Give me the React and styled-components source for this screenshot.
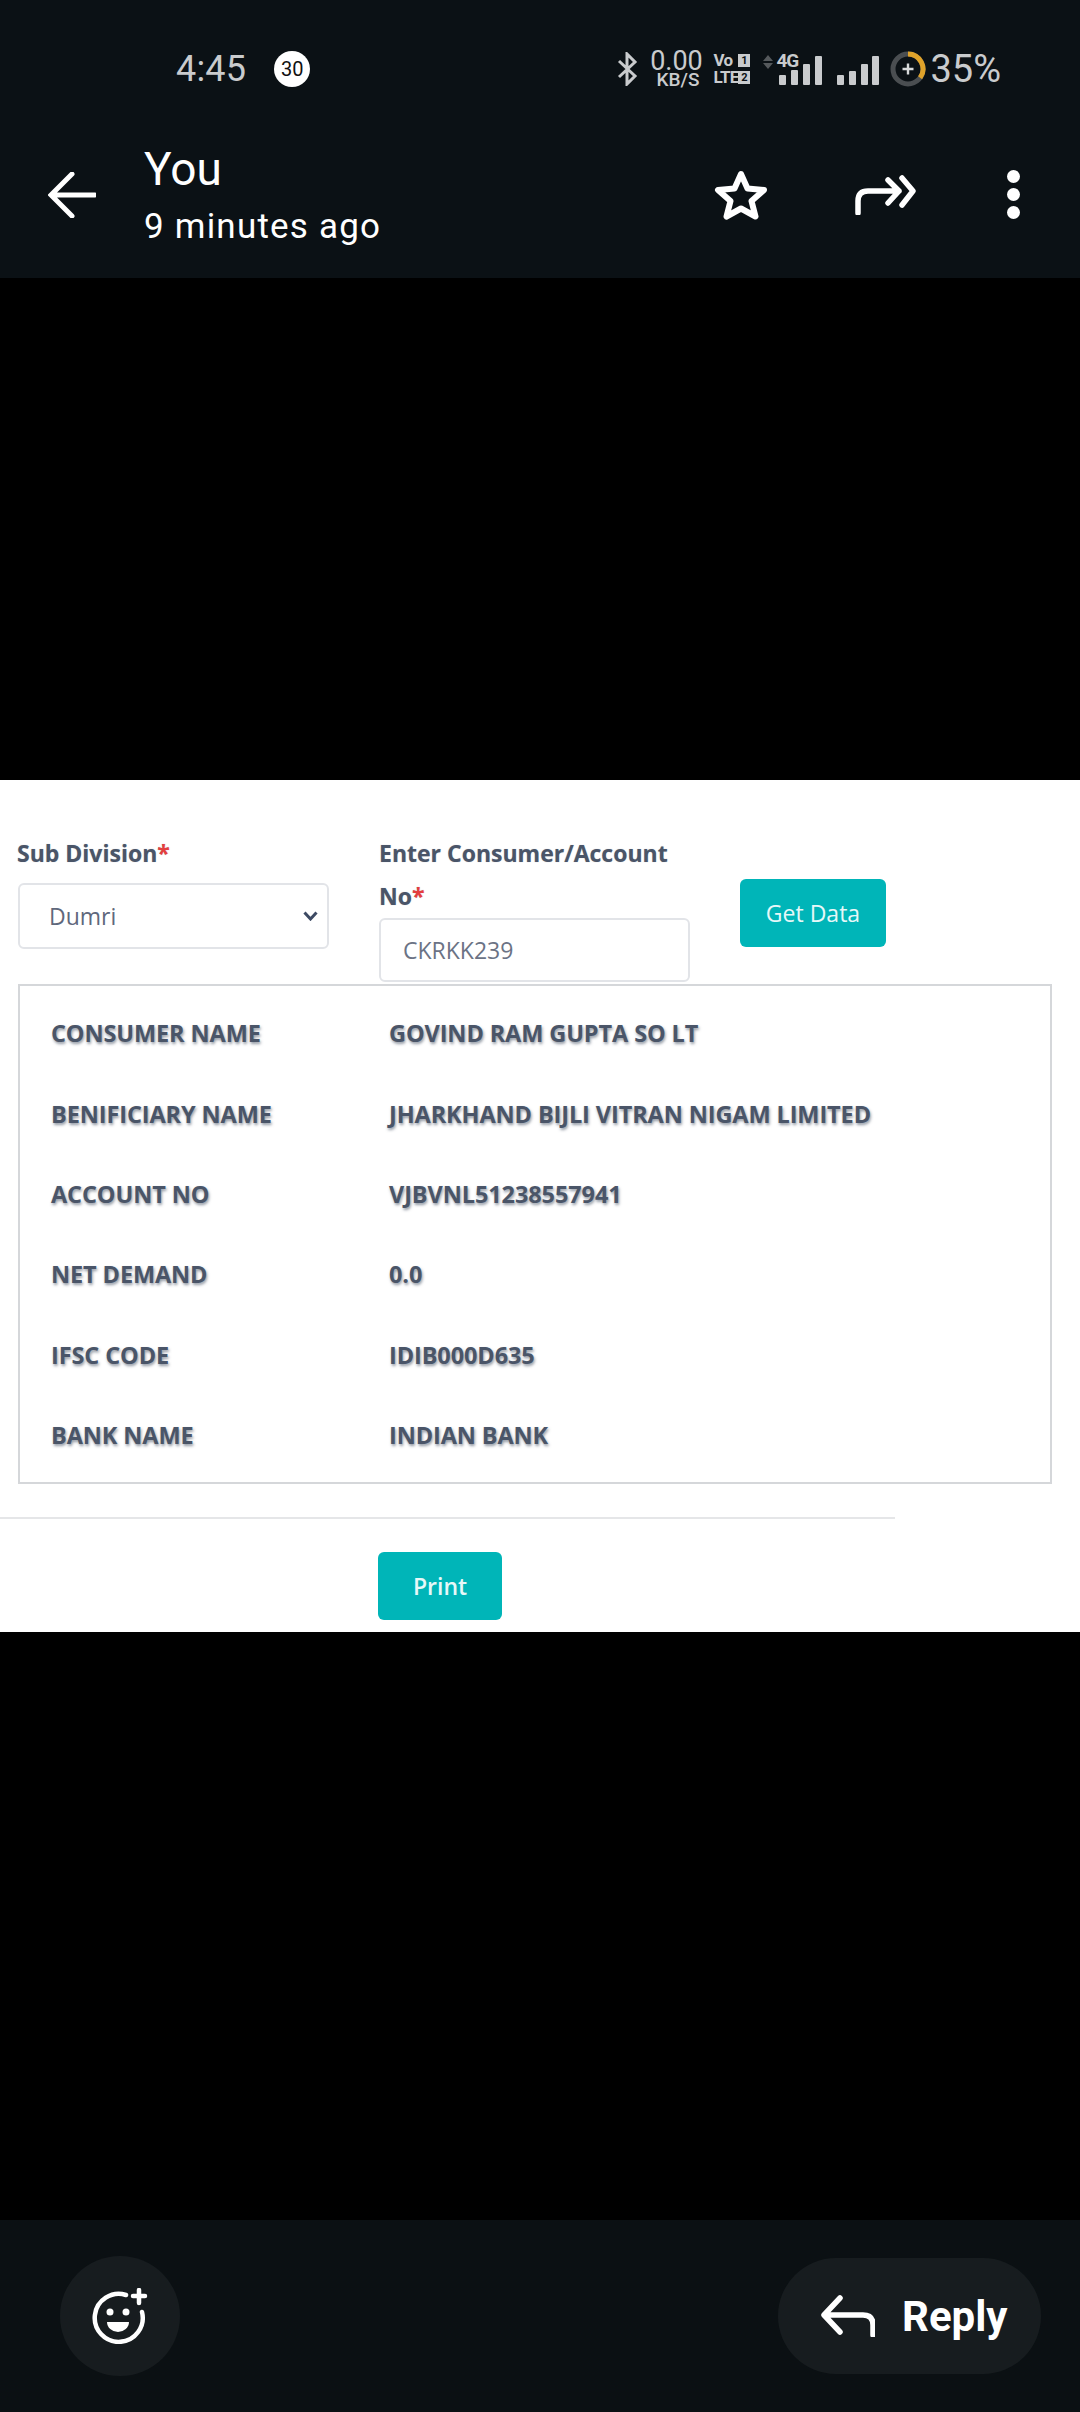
import React from "react";
import styled, { createGlobalStyle } from "styled-components";

const GlobalStyle = createGlobalStyle`
  html, body { margin: 0; padding: 0; background: #000; }
  * { box-sizing: border-box; }
`;

const Page = styled.div`
  width: 1080px;
  height: 2412px;
  display: flex;
  flex-direction: column;
  background: #000;
  font-family: Roboto, "Liberation Sans", sans-serif;
`;

const TopBar = styled.header`
  height: 278px;
  background: #0b1115;
`;

const StatusBar = styled.div`
  height: 137px;
  display: flex;
  align-items: center;
  padding: 0 79px 0 176px;
  color: #c9cbcd;
`;

const Time = styled.span`
  font-size: 36px;
  letter-spacing: 0.2px;
`;

const Badge = styled.span`
  width: 36px;
  height: 36px;
  margin-left: 28px;
  border-radius: 50%;
  background: #fff;
  color: #111;
  font-size: 20px;
  display: flex;
  align-items: center;
  justify-content: center;
`;

const StatusRight = styled.div`
  margin-left: auto;
  display: flex;
  align-items: center;
`;

const Speed = styled.div`
  width: 52px;
  margin: 0 11px 0 12px;
  display: flex;
  flex-direction: column;
  align-items: center;
  font-size: 27px;
  line-height: 21px;
  small {
    font-size: 19px;
    font-weight: 500;
    line-height: 15px;
    margin-left: 3px;
    white-space: nowrap;
  }
`;

const VoLte = styled.div`
  width: 37px;
  display: grid;
  grid-template-columns: 25px 12px;
  row-gap: 4px;
  font-size: 17px;
  font-weight: 700;
  line-height: 13px;
  letter-spacing: -0.8px;
`;

const SimTag = styled.span`
  height: 13px;
  background: #c9cbcd;
  color: #0b1115;
  font-size: 11px;
  letter-spacing: 0;
  text-align: center;
`;

const NetArrows = styled.svg`
  margin: 0 3px 14px 13px;
`;

const Signal = styled.div`
  position: relative;
  width: ${(p) => p.$width}px;
  height: 30px;
  padding-left: ${(p) => p.$inset}px;
  margin-left: ${(p) => p.$left}px;
  margin-top: 3px;
  display: flex;
  align-items: flex-end;
  justify-content: space-between;
`;

const SignalBar = styled.i`
  display: block;
  width: 7px;
  height: ${(p) => p.$h}px;
  background: #c9cbcd;
  border-radius: 1px;
`;

const NetLabel = styled.span`
  position: absolute;
  left: 0;
  top: -3px;
  font-size: 19px;
  font-weight: 700;
  line-height: 17px;
  letter-spacing: -1px;
`;

const Ring = styled.svg`
  margin: 0 4px 0 11px;
`;

const Battery = styled.span`
  font-size: 38px;
  letter-spacing: 0;
`;

const HeaderRow = styled.div`
  height: 141px;
  display: flex;
  align-items: center;
  padding: 0 60px 25px 48px;
  color: #fff;
`;

const TitleBlock = styled.div`
  margin: 3px 0 0 48px;
  display: flex;
  flex-direction: column;
`;

const Title = styled.div`
  font-size: 46px;
  line-height: 60px;
`;

const Subtitle = styled.div`
  font-size: 35px;
  line-height: 56px;
  letter-spacing: 1.2px;
`;

const Actions = styled.div`
  margin-left: auto;
  display: flex;
  align-items: center;
  gap: 87px;
`;

const Dots = styled.div`
  margin: 0 0 2px 3px;
  display: flex;
  flex-direction: column;
  gap: 5px;
  i {
    display: block;
    width: 13px;
    height: 13px;
    border-radius: 50%;
    background: #fff;
  }
`;

const Sheet = styled.section`
  height: 852px;
  margin-top: 502px;
  background: #fff;
  font-family: "Open Sans", "Noto Sans", sans-serif;
  color: #4a5568;
`;

const FormRow = styled.div`
  display: flex;
  align-items: flex-start;
  gap: 50px;
  padding: 52px 0 0 17px;
  margin-bottom: 2px;
`;

const Field = styled.div`
  width: ${(p) => p.$width || 311}px;
`;

const Label = styled.div`
  font-size: 23px;
  font-weight: 700;
  line-height: 43px;
  margin-bottom: ${(p) => (p.$gap ? p.$gap : 0)}px;
  text-shadow: 0 0 1px rgba(74, 85, 104, 0.4);
  span { color: #e53e3e; }
`;

const SelectBox = styled.div`
  height: 66px;
  margin-left: 1px;
  display: flex;
  align-items: center;
  justify-content: space-between;
  padding: 0 9px 0 29px;
  border: 2px solid #e2e4e8;
  border-radius: 6px;
  font-size: 23px;
  color: #5f687c;
`;

const TextInput = styled.input`
  display: block;
  width: 100%;
  height: 64px;
  padding: 0 22px;
  border: 2px solid #e2e4e8;
  border-radius: 6px;
  background: #fff;
  font-family: inherit;
  font-size: 23px;
  color: #6b7385;
  outline: none;
`;

const TealButton = styled.button`
  width: ${(p) => p.$width}px;
  height: 68px;
  margin-top: ${(p) => p.$top}px;
  margin-left: ${(p) => p.$left || 0}px;
  display: block;
  border: none;
  border-radius: 6px;
  background: #00b5b8;
  color: #e6f8f8;
  font-family: inherit;
  font-size: 23px;
  font-weight: ${(p) => p.$weight || 400};
`;

const DetailBox = styled.div`
  width: 1034px;
  height: 500px;
  margin-left: 18px;
  padding: 7px 0 0 31px;
  border: 2px solid #d5d7da;
`;

const DetailRow = styled.div`
  height: 80.4px;
  display: grid;
  grid-template-columns: 338px 1fr;
  align-items: center;
  font-size: 23.5px;
  font-weight: 700;
  letter-spacing: -0.1px;
  text-shadow: 1px 2px 3px rgba(74, 85, 104, 0.6);
`;

const Divider = styled.hr`
  width: 895px;
  height: 2px;
  margin: 33px 0 0;
  border: none;
  background: #e5e6e8;
`;

const BottomBar = styled.footer`
  height: 192px;
  margin-top: auto;
  display: flex;
  align-items: center;
  justify-content: space-between;
  padding: 0 39px 0 60px;
  background: #0b1013;
`;

const RoundButton = styled.div`
  width: 120px;
  height: 120px;
  border-radius: 50%;
  background: #171c1f;
  display: flex;
  align-items: center;
  justify-content: center;
`;

const ReplyButton = styled.div`
  width: 263px;
  height: 116px;
  border-radius: 58px;
  background: #171c1f;
  display: flex;
  align-items: center;
  gap: 27px;
  padding-left: 43px;
  color: #fff;
  font-size: 42px;
  font-weight: 700;
`;

const details = [
  ["CONSUMER NAME", "GOVIND RAM GUPTA SO LT"],
  ["BENIFICIARY NAME", "JHARKHAND BIJLI VITRAN NIGAM LIMITED"],
  ["ACCOUNT NO", "VJBVNL51238557941"],
  ["NET DEMAND", "0.0"],
  ["IFSC CODE", "IDIB000D635"],
  ["BANK NAME", "INDIAN BANK"],
];

function App() {
  return (
    <Page>
      <GlobalStyle />
      <TopBar>
        <StatusBar>
          <Time>4:45</Time>
          <Badge>30</Badge>
          <StatusRight>
            <svg width="21" height="34" viewBox="0 0 21 34" fill="none" stroke="#c9cbcd" strokeWidth="3">
              <path d="M2 9 L18 24 L10 32 V2 L18 10 L2 25" />
            </svg>
            <Speed>
              0.00
              <small>KB/S</small>
            </Speed>
            <VoLte>
              <span>Vo</span>
              <SimTag>1</SimTag>
              <span>LTE</span>
              <SimTag>2</SimTag>
            </VoLte>
            <NetArrows width="10" height="14" viewBox="0 0 10 14" fill="#55595c">
              <path d="M5 0 L10 6 H0 Z M0 8 H10 L5 14 Z" />
            </NetArrows>
            <Signal $width={46} $inset={3} $left={0}>
              <NetLabel>4G</NetLabel>
              <SignalBar $h={10} />
              <SignalBar $h={15} />
              <SignalBar $h={21} />
              <SignalBar $h={29} />
            </Signal>
            <Signal $width={42} $inset={0} $left={15}>
              <SignalBar $h={10} />
              <SignalBar $h={14} />
              <SignalBar $h={21} />
              <SignalBar $h={29} />
            </Signal>
            <Ring width="36" height="36" viewBox="0 0 36 36" fill="none">
              <circle cx="18" cy="18" r="15" stroke="#4a4e51" strokeWidth="5" />
              <path d="M18 3 A15 15 0 0 1 30.1 26.8" stroke="#e0a32a" strokeWidth="5" />
              <path d="M18 12.5 V23.5 M12.5 18 H23.5" stroke="#d8dadb" strokeWidth="2.4" />
            </Ring>
            <Battery>35%</Battery>
          </StatusRight>
        </StatusBar>
        <HeaderRow>
          <svg width="48" height="46" viewBox="0 0 48 46" fill="none" stroke="#fff" strokeWidth="5" strokeLinecap="round">
            <path d="M24 2 L3 23 L24 44 M4 23 H47" />
          </svg>
          <TitleBlock>
            <Title>You</Title>
            <Subtitle>9 minutes ago</Subtitle>
          </TitleBlock>
          <Actions>
            <svg width="54" height="50" viewBox="0 0 54 50" fill="none" stroke="#fff" strokeWidth="6" strokeLinejoin="round">
              <path d="M27 4 L33.5 18.5 L50 20 L37.5 31 L41.5 46.5 L27 38.5 L12.5 46.5 L16.5 31 L4 20 L20.5 18.5 Z" />
            </svg>
            <svg width="62" height="40" viewBox="0 0 62 40" fill="none" stroke="#fff" strokeWidth="5.5" strokeLinecap="round" strokeLinejoin="round">
              <path d="M3 38 V26 Q3 16 13 16 H44 M33 5 L44 16 L33 28 M47 3 L58 16 L47 30" />
            </svg>
            <Dots>
              <i />
              <i />
              <i />
            </Dots>
          </Actions>
        </HeaderRow>
      </TopBar>

      <Sheet>
        <FormRow>
          <Field $width={312}>
            <Label $gap={8}>
              Sub Division<span>*</span>
            </Label>
            <SelectBox>
              Dumri
              <svg width="15" height="10" viewBox="0 0 15 10" fill="none" stroke="#3d4a63" strokeWidth="3">
                <path d="M1.5 1.5 L7.5 8 L13.5 1.5" />
              </svg>
            </SelectBox>
          </Field>
          <Field>
            <Label>
              Enter Consumer/Account No<span>*</span>
            </Label>
            <TextInput value="CKRKK239" readOnly />
          </Field>
          <TealButton $width={146} $top={47}>
            Get Data
          </TealButton>
        </FormRow>

        <DetailBox>
          {details.map(([name, value]) => (
            <DetailRow key={name}>
              <span>{name}</span>
              <span>{value}</span>
            </DetailRow>
          ))}
        </DetailBox>

        <Divider />
        <TealButton $width={124} $top={33} $left={378} $weight={600}>
          Print
        </TealButton>
      </Sheet>

      <BottomBar>
        <RoundButton>
          <svg width="56" height="56" viewBox="0 0 56 56" fill="none" stroke="#fff" strokeWidth="4.5" strokeLinecap="round">
            <path d="M34 7 A24 24 0 1 0 50 24" />
            <path d="M47 2 V15 M41 8 H53" />
            <circle cx="18" cy="24" r="3.5" fill="#fff" stroke="none" />
            <circle cx="34" cy="24" r="3.5" fill="#fff" stroke="none" />
            <path d="M15 34 H37 A11 10 0 0 1 15 34 Z" fill="#fff" stroke="none" />
          </svg>
        </RoundButton>
        <ReplyButton>
          <svg width="54" height="42" viewBox="0 0 54 42" fill="none" stroke="#fff" strokeWidth="5.5" strokeLinecap="round" strokeLinejoin="round">
            <path d="M19 3 L3 20 L19 37 M4 20 H42 Q52 20 52 30 V40" />
          </svg>
          Reply
        </ReplyButton>
      </BottomBar>
    </Page>
  );
}

export default App;
